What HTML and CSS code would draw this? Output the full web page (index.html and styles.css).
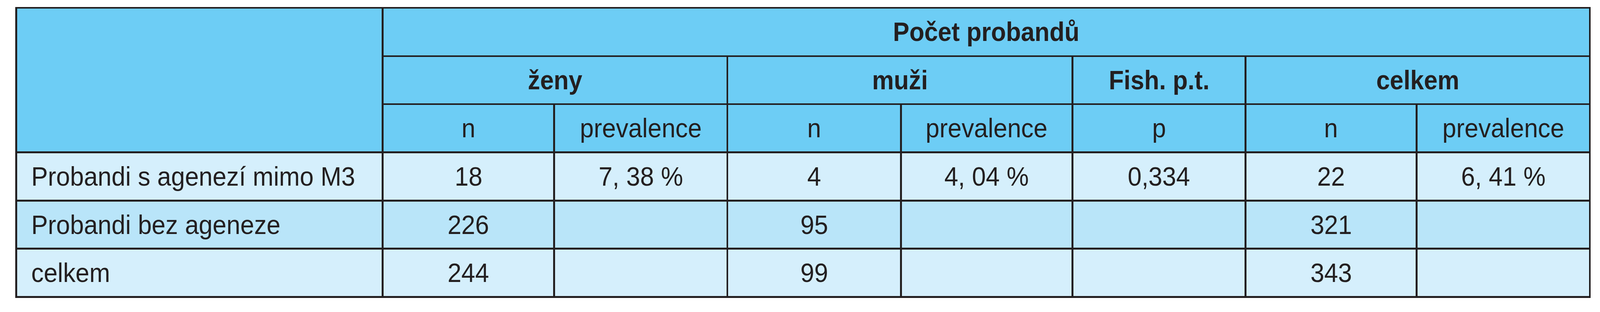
FILE: index.html
```html
<!DOCTYPE html>
<html lang="cs">
<head>
<meta charset="utf-8">
<title>Počet probandů</title>
<link rel="stylesheet" href="styles.css">
</head>
<body>
<div class="grid" role="table">
  <div class="cell head blank" role="columnheader"></div>
  <div class="cell head bold span-all" role="columnheader"><span class="t">Počet probandů</span></div>

  <div class="cell head bold span2" role="columnheader"><span class="t">ženy</span></div>
  <div class="cell head bold span2" role="columnheader"><span class="t">muži</span></div>
  <div class="cell head bold" role="columnheader"><span class="t">Fish. p.t.</span></div>
  <div class="cell head bold span2" role="columnheader"><span class="t">celkem</span></div>

  <div class="cell head" role="columnheader"><span class="t">n</span></div>
  <div class="cell head" role="columnheader"><span class="t">prevalence</span></div>
  <div class="cell head" role="columnheader"><span class="t">n</span></div>
  <div class="cell head" role="columnheader"><span class="t">prevalence</span></div>
  <div class="cell head" role="columnheader"><span class="t">p</span></div>
  <div class="cell head" role="columnheader"><span class="t">n</span></div>
  <div class="cell head" role="columnheader"><span class="t">prevalence</span></div>

  <div class="cell light label" role="rowheader"><span class="t">Probandi s agenezí mimo M3</span></div>
  <div class="cell light" role="cell"><span class="t">18</span></div>
  <div class="cell light" role="cell"><span class="t">7, 38 %</span></div>
  <div class="cell light" role="cell"><span class="t">4</span></div>
  <div class="cell light" role="cell"><span class="t">4, 04 %</span></div>
  <div class="cell light" role="cell"><span class="t">0,334</span></div>
  <div class="cell light" role="cell"><span class="t">22</span></div>
  <div class="cell light" role="cell"><span class="t">6, 41 %</span></div>

  <div class="cell mid label" role="rowheader"><span class="t">Probandi bez ageneze</span></div>
  <div class="cell mid" role="cell"><span class="t">226</span></div>
  <div class="cell mid" role="cell"></div>
  <div class="cell mid" role="cell"><span class="t">95</span></div>
  <div class="cell mid" role="cell"></div>
  <div class="cell mid" role="cell"></div>
  <div class="cell mid" role="cell"><span class="t">321</span></div>
  <div class="cell mid" role="cell"></div>

  <div class="cell light label" role="rowheader"><span class="t">celkem</span></div>
  <div class="cell light" role="cell"><span class="t">244</span></div>
  <div class="cell light" role="cell"></div>
  <div class="cell light" role="cell"><span class="t">99</span></div>
  <div class="cell light" role="cell"></div>
  <div class="cell light" role="cell"></div>
  <div class="cell light" role="cell"><span class="t">343</span></div>
  <div class="cell light" role="cell"></div>
</div>
</body>
</html>
```
FILE: styles.css
```css
:root {
  /* one reference pixel, relative to the 4196px-wide layout */
  --u: calc(100vw / 4196);
}

html, body {
  margin: 0;
  padding: 0;
  background: #ffffff;
  overflow: hidden;
}

body {
  font-family: "Liberation Sans", Arial, sans-serif;
  color: #231f20;
}

.grid {
  display: grid;
  width: max-content;
  margin: calc(18 * var(--u)) 0 0 calc(40 * var(--u));
  padding: calc(5 * var(--u));
  gap: calc(5 * var(--u));
  background: #231f20;
  grid-template-columns:
    calc(956 * var(--u)) calc(445 * var(--u)) calc(449 * var(--u)) calc(450 * var(--u))
    calc(445 * var(--u)) calc(449 * var(--u)) calc(444 * var(--u)) calc(449 * var(--u));
  grid-template-rows:
    calc(122 * var(--u)) calc(121 * var(--u)) calc(122 * var(--u))
    calc(122 * var(--u)) calc(121 * var(--u)) calc(122 * var(--u));
  font-size: calc(71 * var(--u));
  line-height: 1;
}

.cell {
  display: flex;
  align-items: center;
  justify-content: center;
  white-space: nowrap;
}

.head {
  background: #6dcdf5;
}

.blank {
  grid-row: 1 / span 3;
}

.span-all {
  grid-column: 2 / span 7;
}

.span2 {
  grid-column: span 2;
}

.bold {
  font-weight: bold;
}

.light {
  background: #d5effc;
}

.mid {
  background: #b9e5f9;
}

.t {
  display: inline-block;
  transform: scaleX(0.92);
  transform-origin: center center;
}

.bold .t {
  transform: scaleX(0.905);
}

.label {
  justify-content: flex-start;
  padding-left: calc(37 * var(--u));
}

.label .t {
  transform-origin: left center;
}
```
